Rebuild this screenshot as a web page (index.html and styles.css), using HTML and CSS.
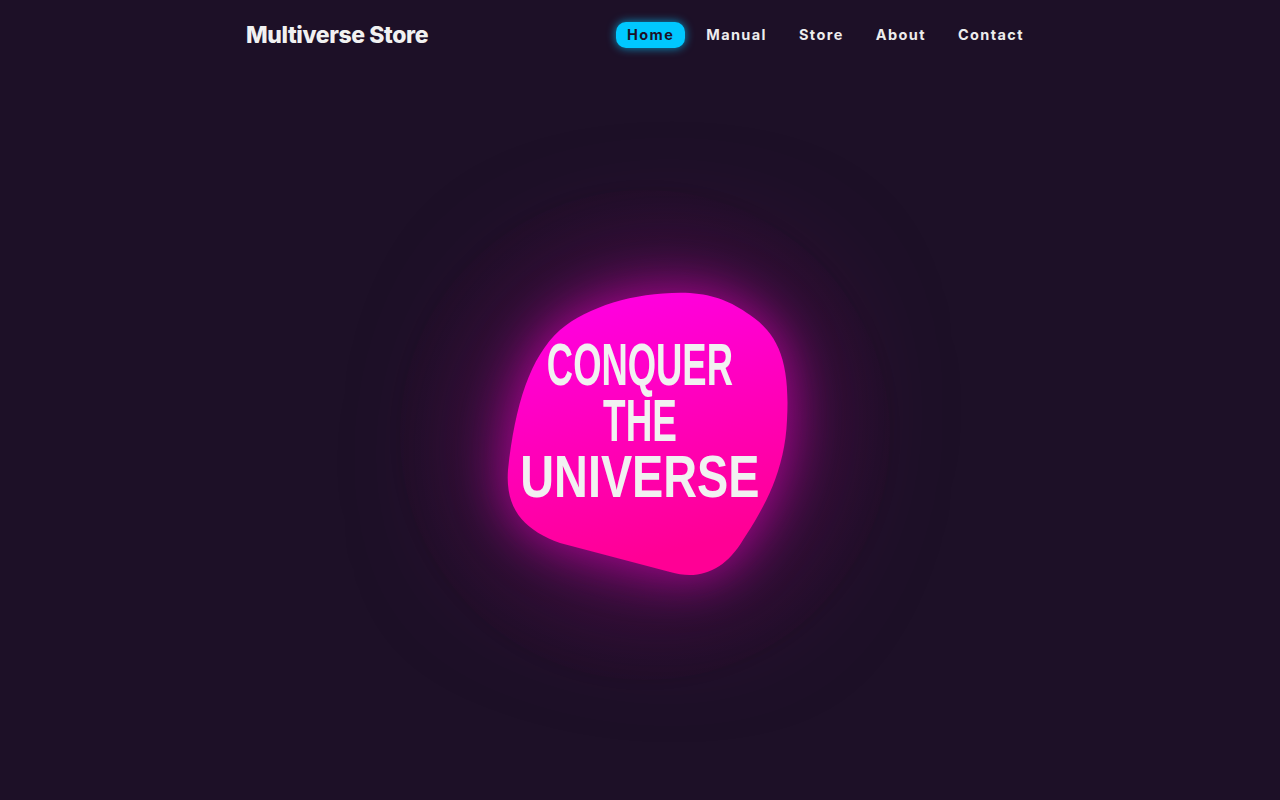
FILE: index.html
```html
<!DOCTYPE html>
<html lang="en">
<head>
<meta charset="utf-8">
<title>Multiverse Store</title>
<link rel="stylesheet" href="styles.css">
</head>
<body>
<header class="topbar">
  <div class="logo">Multiverse Store</div>
  <nav class="nav">
    <a class="nav-link active" href="#">Home</a>
    <a class="nav-link" href="#">Manual</a>
    <a class="nav-link" href="#">Store</a>
    <a class="nav-link" href="#">About</a>
    <a class="nav-link" href="#">Contact</a>
  </nav>
</header>
<main class="hero">
  <div class="halo">
    <svg class="blob" width="300" height="300" viewBox="0 0 300 300" aria-hidden="true">
      <defs>
        <linearGradient id="bg" x1="0" y1="0" x2="0.25" y2="1">
          <stop offset="0" stop-color="#ff00e8"/>
          <stop offset="1" stop-color="#ff0095"/>
        </linearGradient>
      </defs>
      <path transform="translate(5 0)" fill="url(#bg)" d="M190 8 C140 6 90 20 60 45 C30 72 15 120 8 185 C5 225 25 245 60 258 L170 287 C200 296 225 285 243 255 C265 222 285 185 287 135 C290 80 280 50 250 30 C230 16 215 10 190 8 Z"/>
    </svg>
    <h1 class="title">
      <span class="line l1">CONQUER</span>
      <span class="line l2">THE</span>
      <span class="line l3">UNIVERSE</span>
    </h1>
  </div>
</main>
</body>
</html>
```

FILE: styles.css
```css
* { box-sizing: border-box; }
html, body { margin: 0; padding: 0; }
body {
  background: #1d1027;
  color: #f1f1f1;
  font-family: "Inter", "Liberation Sans", sans-serif;
  height: 800px;
  overflow: hidden;
}
.topbar {
  width: 790px;
  margin: 0 auto;
  height: 70px;
  display: flex;
  align-items: center;
  justify-content: space-between;
  padding-left: 1px;
}
.logo {
  font-size: 23px;
  font-weight: 800;
  letter-spacing: -0.4px;
  color: #f1f1f1;
}
.nav {
  display: flex;
  gap: 10px;
  align-items: center;
}
.nav-link {
  text-decoration: none;
  color: #ededed;
  font-weight: 700;
  font-size: 14.5px;
  letter-spacing: 1.4px;
  padding: 4px 11px;
  line-height: 18px;
  border-radius: 10px;
}
.nav-link.active {
  background: #00c8ff;
  color: #1d1027;
  box-shadow: 0 0 10px rgba(0, 200, 255, 0.75);
}
.hero {
  height: 730px;
  display: flex;
  align-items: center;
  justify-content: center;
  padding-left: 10px;
}
.halo {
  width: 490px;
  height: 490px;
  border-radius: 50%;
  display: grid;
  place-items: center;
  background: radial-gradient(circle, rgba(110, 10, 100, 0.3) 0%, rgba(40, 10, 45, 0.25) 55%, rgba(22, 12, 30, 0.45) 100%);
  box-shadow: 0 0 12px rgba(0, 0, 0, 0.12);
}
.blob {
  grid-area: 1 / 1;
  filter: drop-shadow(0 0 25px rgba(255, 0, 210, 0.55)) drop-shadow(0 0 70px rgba(190, 0, 160, 0.5));
}
.title {
  grid-area: 1 / 1;
  margin: 0 10px 28px 0;
  display: flex;
  flex-direction: column;
  align-items: center;
  font-family: "Liberation Sans", sans-serif;
  font-weight: 700;
  color: #f1f1f1;
  font-size: 52px;
  line-height: 56px;
  z-index: 1;
}
.line { display: block; }
.l1 { transform: scale(0.70, 1.13); }
.l2 { transform: scale(0.71, 1.13); }
.l3 { transform: scale(0.90, 1.13); }
```
